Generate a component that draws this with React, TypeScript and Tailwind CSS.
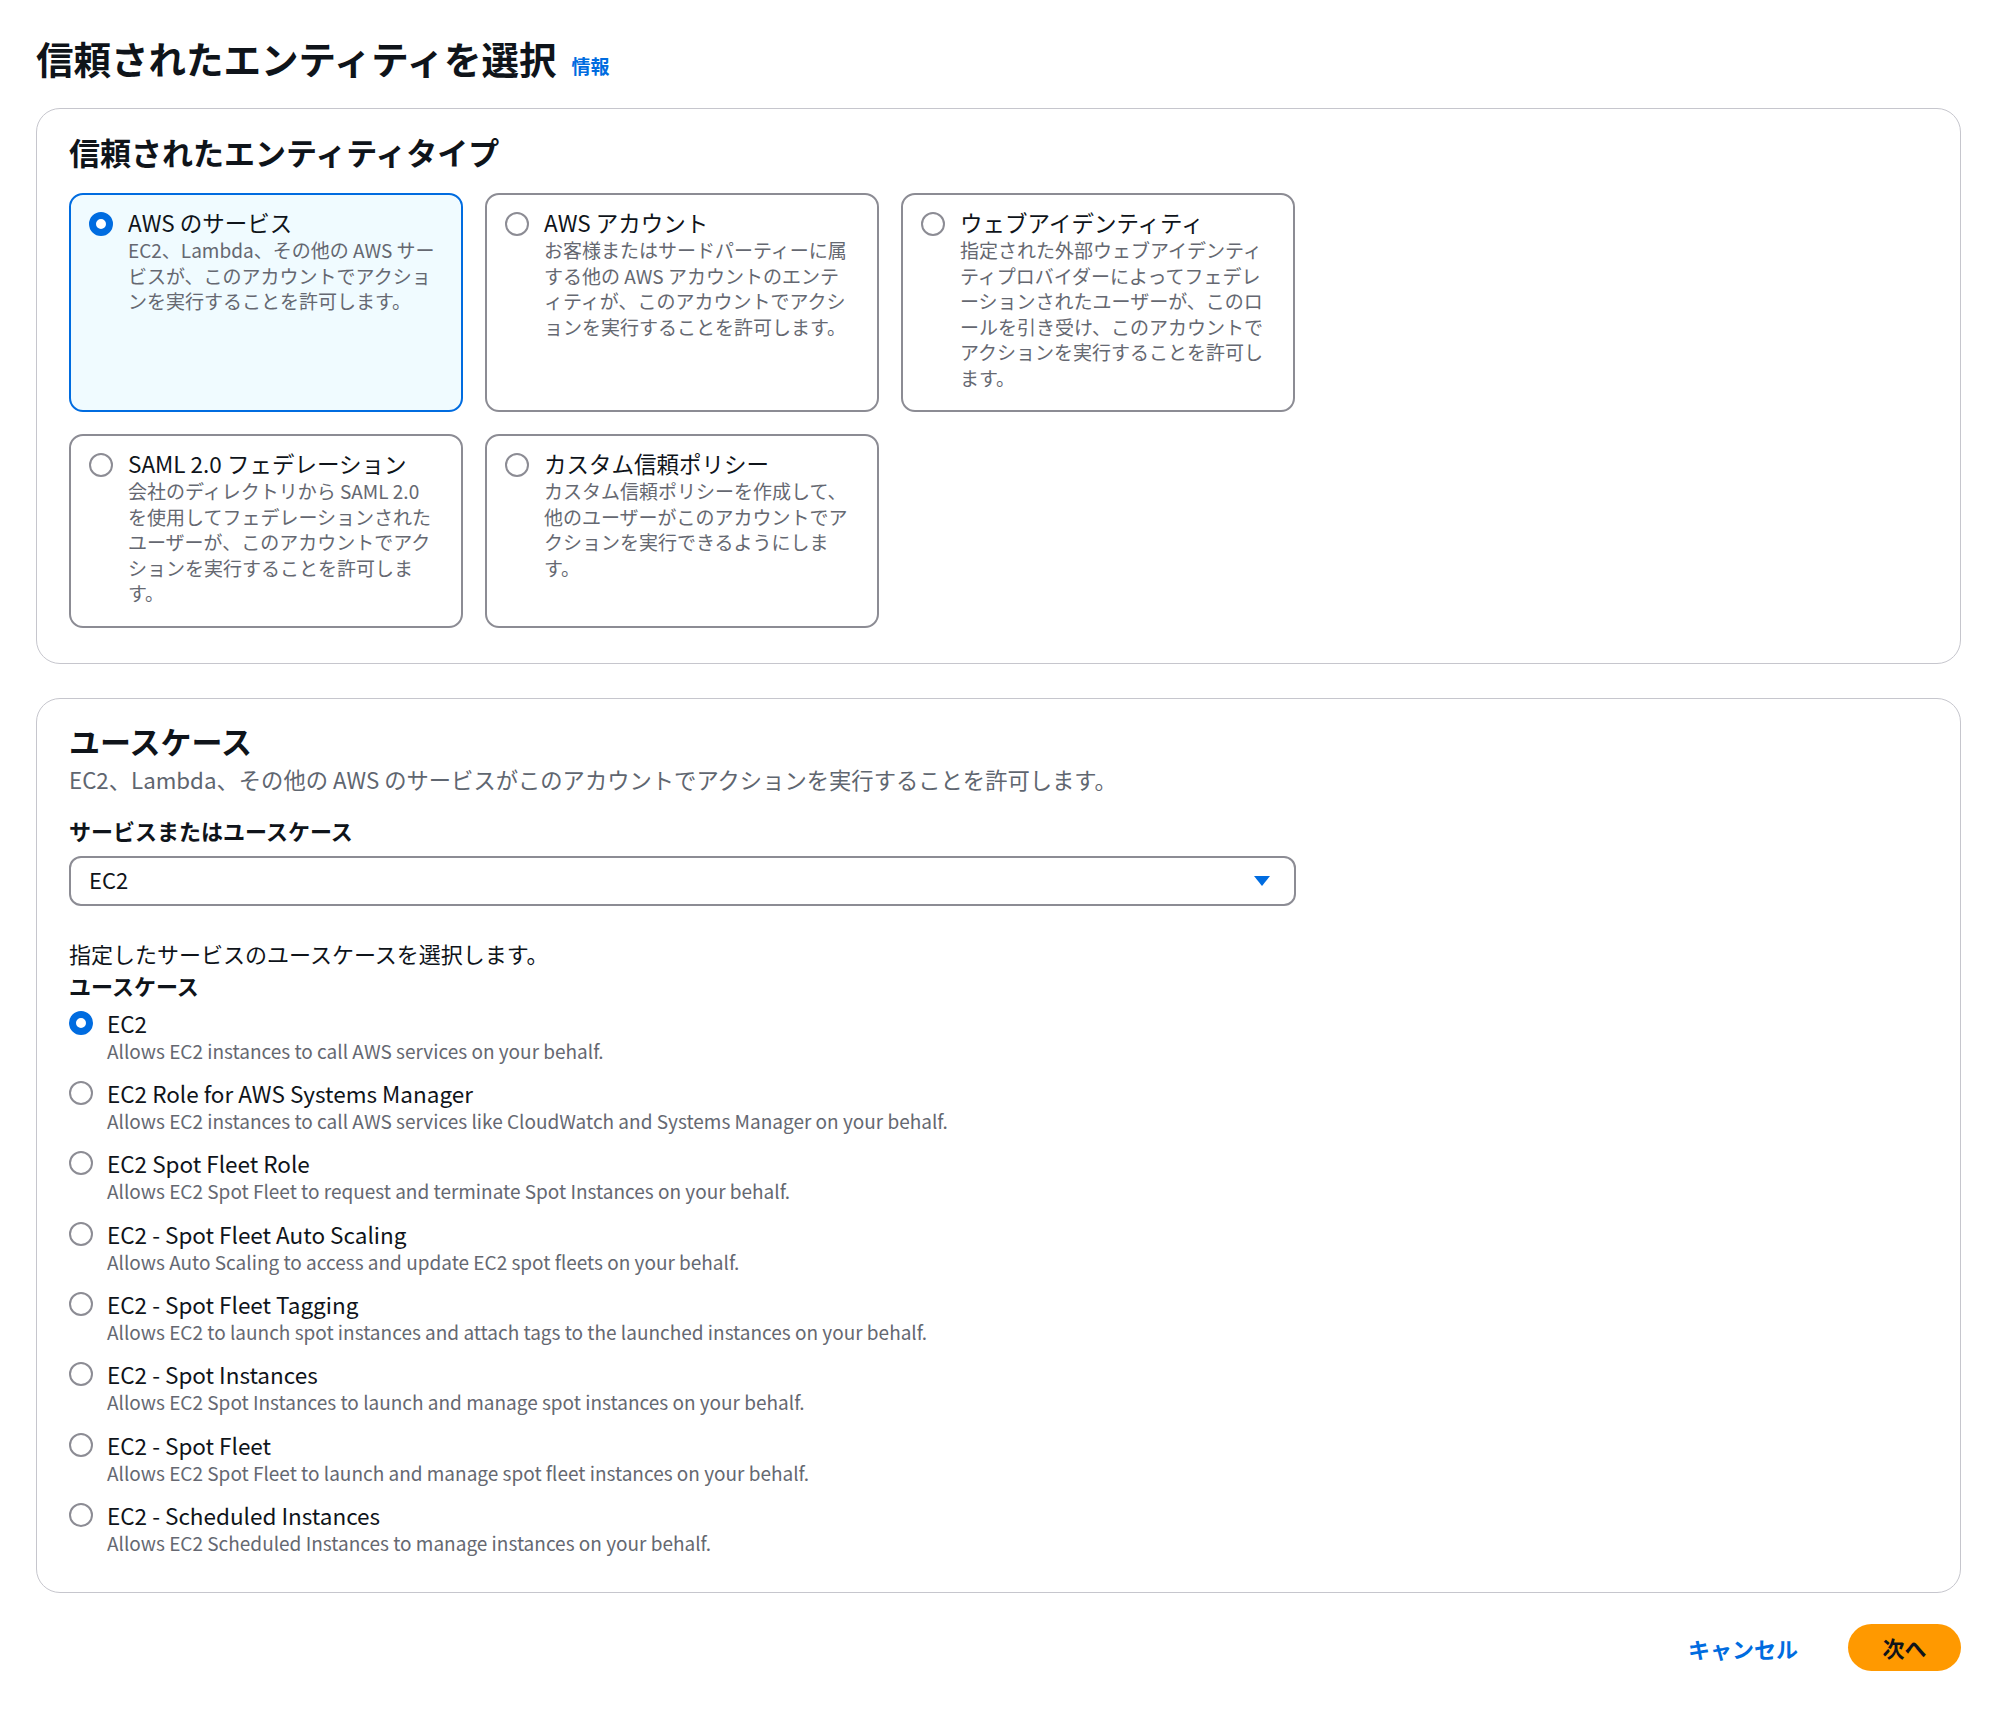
import React from "react";

type Tile = { label: string; lines: string[]; selected?: boolean };

const tiles: Tile[] = [
  {
    label: "AWS のサービス",
    selected: true,
    lines: [
      "EC2、Lambda、その他の AWS サー",
      "ビスが、このアカウントでアクショ",
      "ンを実行することを許可します。",
    ],
  },
  {
    label: "AWS アカウント",
    lines: [
      "お客様またはサードパーティーに属",
      "する他の AWS アカウントのエンテ",
      "ィティが、このアカウントでアクシ",
      "ョンを実行することを許可します。",
    ],
  },
  {
    label: "ウェブアイデンティティ",
    lines: [
      "指定された外部ウェブアイデンティ",
      "ティプロバイダーによってフェデレ",
      "ーションされたユーザーが、このロ",
      "ールを引き受け、このアカウントで",
      "アクションを実行することを許可し",
      "ます。",
    ],
  },
  {
    label: "SAML 2.0 フェデレーション",
    lines: [
      "会社のディレクトリから SAML 2.0",
      "を使用してフェデレーションされた",
      "ユーザーが、このアカウントでアク",
      "ションを実行することを許可しま",
      "す。",
    ],
  },
  {
    label: "カスタム信頼ポリシー",
    lines: [
      "カスタム信頼ポリシーを作成して、",
      "他のユーザーがこのアカウントでア",
      "クションを実行できるようにしま",
      "す。",
    ],
  },
];

const useCases = [
  ["EC2", "Allows EC2 instances to call AWS services on your behalf."],
  [
    "EC2 Role for AWS Systems Manager",
    "Allows EC2 instances to call AWS services like CloudWatch and Systems Manager on your behalf.",
  ],
  ["EC2 Spot Fleet Role", "Allows EC2 Spot Fleet to request and terminate Spot Instances on your behalf."],
  ["EC2 - Spot Fleet Auto Scaling", "Allows Auto Scaling to access and update EC2 spot fleets on your behalf."],
  [
    "EC2 - Spot Fleet Tagging",
    "Allows EC2 to launch spot instances and attach tags to the launched instances on your behalf.",
  ],
  ["EC2 - Spot Instances", "Allows EC2 Spot Instances to launch and manage spot instances on your behalf."],
  ["EC2 - Spot Fleet", "Allows EC2 Spot Fleet to launch and manage spot fleet instances on your behalf."],
  ["EC2 - Scheduled Instances", "Allows EC2 Scheduled Instances to manage instances on your behalf."],
];

function Radio({ checked }: { checked?: boolean }) {
  return checked ? (
    <span className="block w-[24px] h-[24px] shrink-0 rounded-full border-[7px] border-[#006ce0] bg-white" />
  ) : (
    <span className="block w-[24px] h-[24px] shrink-0 rounded-full border-2 border-[#8c8c94] bg-white" />
  );
}

export default function App() {
  return (
    <div className="h-[1711px] overflow-hidden bg-white text-[#0f141a] font-['Noto_Sans_CJK_JP','Noto_Sans',sans-serif] pl-[36px] pr-[39px] pt-[36px]">
      <div className="flex items-baseline gap-[15px] mb-[28px]">
        <h1 className="text-[37.5px] leading-[44px] font-bold">信頼されたエンティティを選択</h1>
        <span className="text-[19px] leading-[24px] font-bold text-[#006ce0]">情報</span>
      </div>

      <section className="border border-[#c6c6cd] rounded-[24px] px-[32px] pt-[23px] pb-[35px]">
        <h2 className="text-[31px] leading-[40px] font-bold mb-[21px]">信頼されたエンティティタイプ</h2>
        <div className="grid grid-cols-[repeat(3,394px)] gap-[22px]">
          {tiles.map((t) => (
            <div
              key={t.label}
              className={
                t.selected
                  ? "border-2 border-[#006ce0] bg-[#f0fbff] rounded-[14px] pl-[18px] pr-[12px] pt-[12px] pb-[20px] flex gap-[15px]"
                  : "border-2 border-[#8c8c94] bg-white rounded-[14px] pl-[18px] pr-[12px] pt-[12px] pb-[20px] flex gap-[15px]"
              }
            >
              <div className="pt-[5px]">
                <Radio checked={t.selected} />
              </div>
              <div>
                <div className="text-[22.5px] leading-[30px] whitespace-nowrap">{t.label}</div>
                <div className="text-[19px] leading-[25.5px] text-[#656871]">
                  {t.lines.map((l, i) => (
                    <div key={i} className="whitespace-nowrap">
                      {l}
                    </div>
                  ))}
                </div>
              </div>
            </div>
          ))}
        </div>
      </section>

      <section className="mt-[34px] border border-[#c6c6cd] rounded-[24px] px-[32px] pt-[22px] pb-[36px]">
        <h2 className="text-[31px] leading-[40px] font-bold">ユースケース</h2>
        <p className="mt-[3px] text-[22.3px] leading-[30px] text-[#5f6670]">
          EC2、Lambda、その他の AWS のサービスがこのアカウントでアクションを実行することを許可します。
        </p>
        <div className="mt-[21px] text-[22px] leading-[30px] font-bold">サービスまたはユースケース</div>
        <div className="mt-[11px] w-[1227px] h-[50px] border-2 border-[#8c8c94] rounded-[12px] flex items-center justify-between pl-[18px] pr-[24px]">
          <span className="text-[22px] leading-[30px] -mt-[3px]">EC2</span>
          <svg width="16" height="10" viewBox="0 0 16 10">
            <polygon points="0,0 16,0 8,10" fill="#006ce0" />
          </svg>
        </div>
        <p className="mt-[32px] text-[22px] leading-[30px]">指定したサービスのユースケースを選択します。</p>
        <div className="mt-[2px] text-[22px] leading-[30px] font-bold">ユースケース</div>
        <div className="mt-[8px] flex flex-col gap-[14.4px]">
          {useCases.map(([label, desc], i) => (
            <div key={label} className="flex gap-[14px]">
              <div className="pt-[3px]">
                <Radio checked={i === 0} />
              </div>
              <div>
                <div className="text-[22.5px] leading-[30px]">{label}</div>
                <div className="text-[19px] leading-[26px] text-[#656871]">{desc}</div>
              </div>
            </div>
          ))}
        </div>
      </section>

      <div className="mt-[31px] flex justify-end items-center gap-[50px]">
        <span className="text-[22px] leading-[30px] font-bold text-[#006ce0]">キャンセル</span>
        <button className="h-[47px] w-[113px] rounded-full bg-[#ff9900] text-[22px] font-bold text-[#0f141a]">
          次へ
        </button>
      </div>
    </div>
  );
}
